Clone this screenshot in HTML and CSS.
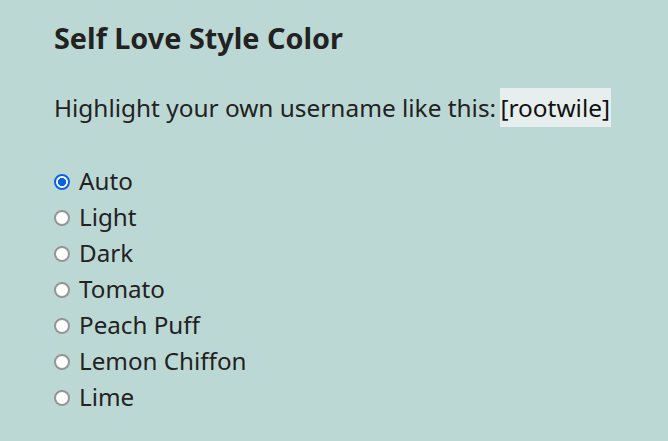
FILE: index.html
```html
<!DOCTYPE html>
<html>
<head>
<meta charset="utf-8">
<link rel="stylesheet" href="styles.css">
</head>
<body>
<main class="panel">
  <h2 class="title">Self Love Style Color</h2>
  <p class="intro">Highlight your own username like this: <span class="hl">[rootwile]</span></p>
  <div class="options">
    <label class="opt"><span class="radio on"></span>Auto</label>
    <label class="opt"><span class="radio"></span>Light</label>
    <label class="opt"><span class="radio"></span>Dark</label>
    <label class="opt"><span class="radio"></span>Tomato</label>
    <label class="opt"><span class="radio"></span>Peach Puff</label>
    <label class="opt"><span class="radio"></span>Lemon Chiffon</label>
    <label class="opt"><span class="radio"></span>Lime</label>
  </div>
</main>
</body>
</html>
```
FILE: styles.css
```css
html, body {
  margin: 0;
  background: #bcd8d4;
}
body {
  font-family: "Noto Sans", "Open Sans", sans-serif;
  color: #222;
}
.panel {
  padding: 18px 0 0 54px;
}
.title {
  margin: 0;
  font-size: 28.8px;
  font-weight: 700;
  line-height: 40px;
}
.intro {
  margin: 30px 0 0;
  font-size: 24.4px;
  line-height: 39px;
}
.hl {
  background: #e6efed;
  color: #111;
  display: inline-block;
  padding: 0 1px 0 0;
  margin-left: -2px;
}
.options {
  margin-top: 36px;
  display: flex;
  flex-direction: column;
}
.opt {
  display: flex;
  align-items: center;
  font-size: 24.2px;
  line-height: 36px;
}
.radio {
  display: block;
  flex: none;
  width: 16px;
  height: 16px;
  margin: 1px 9px 0 0;
  box-sizing: border-box;
  border: 2px solid #959595;
  border-radius: 50%;
  background: #fff;
}
.radio.on {
  border-color: #0b63de;
  background: radial-gradient(circle, #0b63de 0 3.8px, #fff 4.4px);
}
```
